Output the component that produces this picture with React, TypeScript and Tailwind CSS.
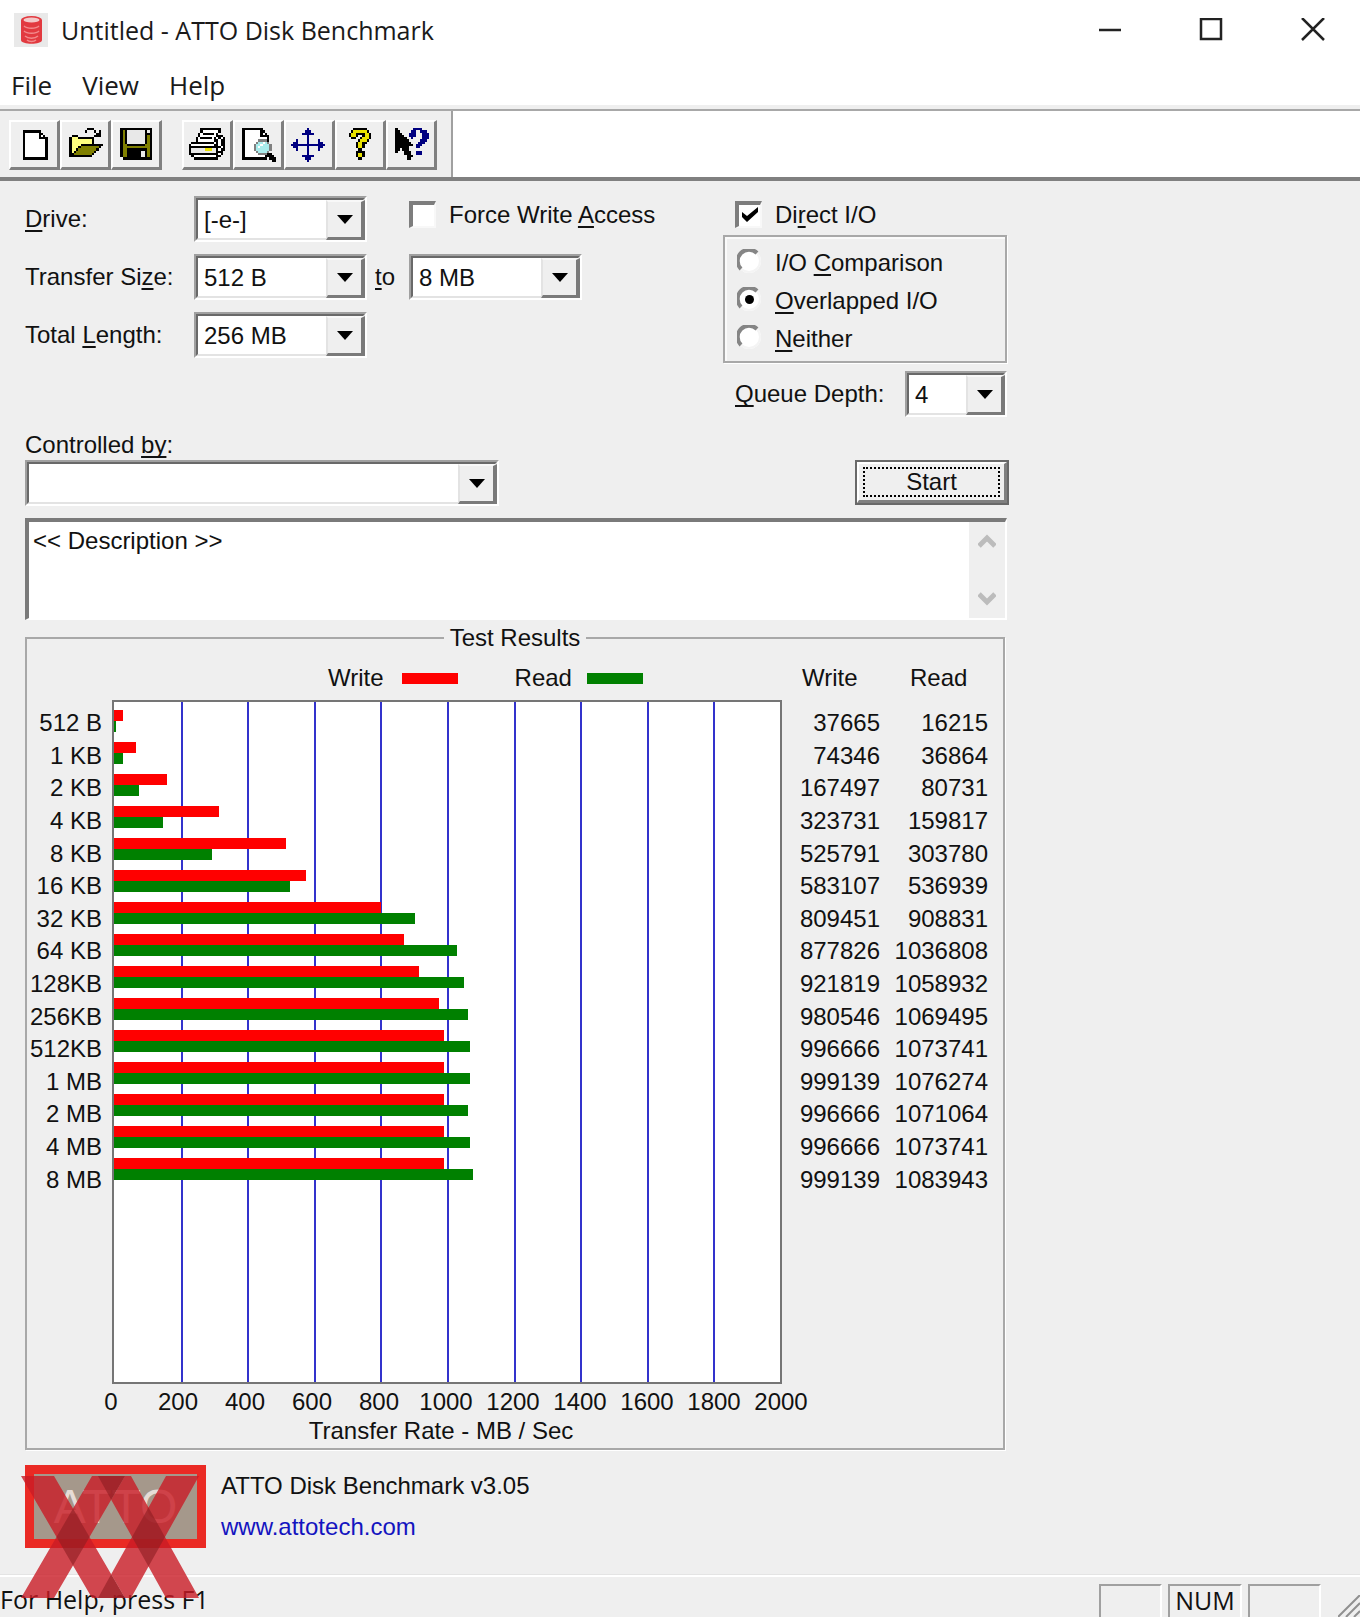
import React from "react";

const ui = "font-['Open_Sans','Noto_Sans',sans-serif]";

const results: [string, number, number][] = [
  ["512 B", 37665, 16215],
  ["1 KB", 74346, 36864],
  ["2 KB", 167497, 80731],
  ["4 KB", 323731, 159817],
  ["8 KB", 525791, 303780],
  ["16 KB", 583107, 536939],
  ["32 KB", 809451, 908831],
  ["64 KB", 877826, 1036808],
  ["128KB", 921819, 1058932],
  ["256KB", 980546, 1069495],
  ["512KB", 996666, 1073741],
  ["1 MB", 999139, 1076274],
  ["2 MB", 996666, 1071064],
  ["4 MB", 996666, 1073741],
  ["8 MB", 999139, 1083943],
];

const axis = [0, 200, 400, 600, 800, 1000, 1200, 1400, 1600, 1800, 2000];

const barWidth = (kb: number) => `${((Math.floor(kb * 0.00015) - 1) / 299) * 100}%`;

const palette: Record<string, string> = {
  K: "#000000",
  W: "#ffffff",
  Y: "#ffff80",
  H: "#e8e000",
  O: "#808000",
  N: "#000080",
  G: "#808080",
  C: "#a8ecec",
  E: "#e8e8e8",
};

const icons: Record<string, string[]> = {
  New: [
    "................",
    "...KKKKKKKK.....",
    "...KWWWWWWKK....",
    "...KWWWWWWKWK...",
    "...KWWWWWWKKKK..",
    "...KWWWWWWWWWK..",
    "...KWWWWWWWWWK..",
    "...KWWWWWWWWWK..",
    "...KWWWWWWWWWK..",
    "...KWWWWWWWWWK..",
    "...KWWWWWWWWWK..",
    "...KWWWWWWWWWK..",
    "...KWWWWWWWWWK..",
    "...KKKKKKKKKKK..",
  ],
  Open: [
    ".........KKK....",
    "........K...K.K.",
    ".............KK.",
    "..KKK.......KKK.",
    ".KYYYKKKKKKK....",
    ".KYYYYYYYYYK....",
    ".KYYYYYYYYYK....",
    ".KYYYYKKKKKKKKKK",
    ".KYYYKOOOOOOOOK.",
    ".KYYKOOOOOOOOK..",
    ".KYKOOOOOOOOK...",
    ".KKOOOOOOOOK....",
    ".KKKKKKKKKK.....",
  ],
  Save: [
    ".KKKKKKKKKKKKKK.",
    ".KOKEEEEEEEEKEK.",
    ".KOKEEEEEEEEKKK.",
    ".KOKEEEEEEEEKOK.",
    ".KOKEEEEEEEEKOK.",
    ".KOKEEEEEEEEKOK.",
    ".KOKEEEEEEEEKOK.",
    ".KOOKKKKKKKKOOK.",
    ".KOOOOOOOOOOOOK.",
    ".KOOKKKKKKKKKOK.",
    ".KOOKKKKKKEEKOK.",
    ".KOOKKKKKKEEKOK.",
    ".KOOKKKKKKEEKOK.",
    "..KKKKKKKKKKKKK.",
  ],
  Print: [
    ".....KKKKKKKKK..",
    ".....KWWWWWWWK..",
    "....KWKKKKKWK...",
    "....KWWWWWWWKKK.",
    "...KWKKKKKWKWKWK",
    "...KWWWWWWWKKWKK",
    ".KKKKKKKKKKWKWKK",
    "KWWWWWWWWWWKKWKK",
    "KKKKKKKKKKKKKKWK",
    "KEEEEEEHHHEEKWKK",
    "KEEEEEEEEEEEKKK.",
    "KKKKKKKKKKKKKWK.",
    ".KWWWWWWWWWWKK..",
    "..KKKKKKKKKKK...",
  ],
  "Print Preview": [
    ".KKKKKKKKK......",
    ".KWWWWWWWKK.....",
    ".KWWWWWWWKWK....",
    ".KWWWWWWWKKKK...",
    ".KWWWWWWWWWWK...",
    ".KWWWWWWGGGGK...",
    ".KWWWWWGCCWCG...",
    ".KWWWWGCCWCCCG..",
    ".KWWWWGCWCCCCG..",
    ".KWWWWGCCCCCCG..",
    ".KWWWWWGCCCCG...",
    ".KWWWWWWGGGGKK..",
    ".KWWWWWWWWWKKKK.",
    ".KKKKKKKKKKK.KKK",
    "..............KK",
  ],
  Move: [
    ".......N........",
    "......NNN.......",
    ".....NNNNN......",
    ".......N........",
    ".......N........",
    "..N....N....N...",
    ".NN....N....NN..",
    "NNNNNNNNNNNNNNN.",
    ".NN....N....NN..",
    "..N....N....N...",
    ".......N........",
    ".......N........",
    ".....NNNNN......",
    "......NNN.......",
    ".......N........",
  ],
  About: [
    ".....KKKKKK.....",
    "....KHHHHHHK....",
    "...KHHKKKKHHK...",
    "...KHHK..KHHK...",
    "....KK..KHHHK...",
    ".......KHHHK....",
    "......KHHKK.....",
    "......KHHK......",
    "......KHHK......",
    ".......KK.......",
    "......KKKK......",
    "......KHHK......",
    "......KHHK......",
    ".......KK.......",
  ],
  "Context Help": [
    ".K.......NNNN...",
    ".KK.....NN..NNN.",
    ".KKK...NNN...NNN",
    ".KKKK..NNN...NNN",
    ".KKKKK..N....NNN",
    ".KKKKKK.....NNN.",
    ".KKKKKKK...NNN..",
    ".KKKKKKKK.NNN...",
    ".KKKKKK...NN....",
    ".KK.KKK.........",
    ".K...KKK..NNN...",
    ".....KKK..NNN...",
    "......KKK.......",
    "......KK........",
  ],
};

function PixelIcon({ name }: { name: string }) {
  return (
    <svg viewBox="0 0 16 15" className="h-[34px] w-9" shapeRendering="crispEdges" aria-hidden="true">
      {icons[name].flatMap((row, y) =>
        row.split("").map((c, x) =>
          c === "." ? null : <rect key={`${x}-${y}`} x={x} y={y} width="1" height="1" fill={palette[c]} />
        )
      )}
    </svg>
  );
}

function ToolButton({ name }: { name: string }) {
  return (
    <button
      type="button"
      aria-label={name}
      className="flex h-[50px] w-[51px] items-center justify-center border-t-2 border-r-[3px] border-b-[3px] border-l-2 border-t-white border-r-[#808080] border-b-[#808080] border-l-white bg-[#efefef]"
    >
      <PixelIcon name={name} />
    </button>
  );
}

function Combo({ id, value, options, className }: { id: string; value: string; options: string[]; className: string }) {
  return (
    <div className={`relative h-[46px] border-2 border-t-[#a0a0a0] border-r-white border-b-white border-l-[#a0a0a0] ${className}`}>
      <select
        id={id}
        defaultValue={value}
        className="block h-full w-full appearance-none border-2 border-t-[#696969] border-r-[#e3e3e3] border-b-[#e3e3e3] border-l-[#696969] bg-white pt-0.5 pl-1.5 outline-none"
      >
        {options.map((o) => (
          <option key={o}>{o}</option>
        ))}
      </select>
      <span className="pointer-events-none absolute top-0.5 right-0 bottom-0 flex w-[39px] items-center justify-center border-t-2 border-r-4 border-b-[3px] border-l-2 border-t-[#f8f8f8] border-r-[#7a7a7a] border-b-[#7a7a7a] border-l-[#e3e3e3] bg-[#efefef]">
        <svg viewBox="0 0 16 9" className="h-[9px] w-4" aria-hidden="true">
          <path d="M0 0h16L8 9z" fill="#000" />
        </svg>
      </span>
    </div>
  );
}

function Check({ id, checked, children }: { id: string; checked?: boolean; children: React.ReactNode }) {
  return (
    <div className="flex items-center gap-[13px] whitespace-nowrap">
      <span className="relative h-[27px] w-[27px] shrink-0">
        <input
          id={id}
          type="checkbox"
          defaultChecked={checked}
          className="peer block h-full w-full appearance-none border-t-4 border-r-2 border-b-2 border-l-4 border-t-[#7d7d7d] border-r-[#f8f8f8] border-b-[#f8f8f8] border-l-[#7d7d7d] bg-white"
        />
        <svg viewBox="0 0 18 16" className="pointer-events-none absolute top-1.5 left-1.5 hidden h-4 w-[18px] peer-checked:block" aria-hidden="true">
          <path d="M1 5v5l5 5L17 5V0L6 9z" fill="#000" />
        </svg>
      </span>
      <label htmlFor={id} className="pt-0.5">{children}</label>
    </div>
  );
}

function Radio({ id, checked, children }: { id: string; checked?: boolean; children: React.ReactNode }) {
  return (
    <div className="flex h-[38px] items-center gap-3.5">
      <span className="relative h-6 w-6 shrink-0">
        <input
          id={id}
          type="radio"
          name="io-mode"
          defaultChecked={checked}
          className="peer block h-full w-full appearance-none rounded-full bg-white"
        />
        <svg viewBox="0 0 24 24" className="pointer-events-none absolute inset-0" fill="none" aria-hidden="true">
          <circle cx="12" cy="12" r="11" stroke="#f4f4f4" strokeWidth="2" />
          <path d="M4 20A11 11 0 0 1 20 4" stroke="#858585" strokeWidth="4" />
        </svg>
        <span className="pointer-events-none absolute top-2 left-2 hidden h-[9px] w-[9px] rounded-full bg-black peer-checked:block" />
      </span>
      <label htmlFor={id} className="pt-1">{children}</label>
    </div>
  );
}

const U = ({ children }: { children: React.ReactNode }) => (
  <span className="underline decoration-2 underline-offset-3 [text-decoration-skip-ink:none]">{children}</span>
);

function TitleBar() {
  return (
    <header className={`flex h-[60px] items-center bg-white pl-3.5 text-[25px] text-[#1a1a1a] ${ui}`}>
      <svg viewBox="0 0 34 34" className="h-[34px] w-[34px]" aria-hidden="true">
        <rect width="34" height="34" fill="#e9e9e9" />
        <path d="M7 7v20c0 5 21 5 21 0V7z" fill="#e23a40" />
        <ellipse cx="17.5" cy="7" rx="10.5" ry="4" fill="#e23a40" />
        <ellipse cx="17.5" cy="7" rx="8" ry="2.5" fill="#f3c9c9" />
        <path d="M10 13c3 3 12 3 15 0M10 18c3 3 12 3 15 0M11 23c3 3 10 3 13 0M13 27c2 2 7 2 9 0" fill="none" stroke="#f28a8c" strokeWidth="1.5" />
      </svg>
      <h1 className="ml-[13px] flex-1 whitespace-nowrap">Untitled - ATTO Disk Benchmark</h1>
      <div className="flex pr-[35px]">
        <button type="button" aria-label="Minimize" className="mr-[77px]">
          <svg viewBox="0 0 24 24" className="h-6 w-6"><path d="M1 12h22" stroke="#222" strokeWidth="2.5" /></svg>
        </button>
        <button type="button" aria-label="Maximize" className="mr-[78px]">
          <svg viewBox="0 0 24 24" className="h-6 w-6"><path d="M2 1h20v20H2z" fill="none" stroke="#222" strokeWidth="2.5" /></svg>
        </button>
        <button type="button" aria-label="Close">
          <svg viewBox="0 0 24 24" className="h-6 w-6"><path d="M1 0l22 22M23 0L1 22" stroke="#222" strokeWidth="2.5" /></svg>
        </button>
      </div>
    </header>
  );
}

function Settings() {
  return (
    <section className="flex justify-between">
      <div className="grid auto-rows-min grid-cols-[169px_173px_42px_auto] items-center gap-y-3 whitespace-nowrap">
        <label htmlFor="drive"><U>D</U>rive:</label>
        <Combo id="drive" value="[-e-]" options={["[-c-]", "[-d-]", "[-e-]"]} className="w-full" />
        <div className="col-start-4 self-start pt-[3px]">
          <div className="w-[173px]">
            <Check id="force">Force Write <U>A</U>ccess</Check>
          </div>
        </div>
        <label htmlFor="size-from">Transfer Si<U>z</U>e:</label>
        <Combo id="size-from" value="512 B" options={["512 B", "1 KB", "2 KB"]} className="w-full" />
        <label htmlFor="size-to" className="pl-2"><U>t</U>o</label>
        <Combo id="size-to" value="8 MB" options={["2 MB", "4 MB", "8 MB"]} className="w-[173px]" />
        <label htmlFor="length">Total <U>L</U>ength:</label>
        <Combo id="length" value="256 MB" options={["64 MB", "128 MB", "256 MB"]} className="w-full" />
      </div>
      <div className="w-[284px]">
        <div className="h-[39px] pt-[3px] pl-3">
          <Check id="direct" checked>Di<U>r</U>ect I/O</Check>
        </div>
        <div role="radiogroup" aria-label="I/O mode" className="border-2 border-[#a8a8a8] py-[5px] pl-3 shadow-[inset_2px_2px_0_#fafafa,1px_1px_0_#fff]">
          <Radio id="compare">I/O <U>C</U>omparison</Radio>
          <Radio id="overlapped" checked><U>O</U>verlapped I/O</Radio>
          <Radio id="neither"><U>N</U>either</Radio>
        </div>
        <div className="mt-2 flex items-center justify-between pl-3">
          <label htmlFor="queue"><U>Q</U>ueue Depth:</label>
          <Combo id="queue" value="4" options={["2", "4", "8"]} className="w-[102px]" />
        </div>
      </div>
    </section>
  );
}

function Chart() {
  return (
    <fieldset className="mt-1 mr-0.5 flex border-2 border-[#a8a8a8] shadow-[1px_1px_0_#fff]">
      <legend className="mx-auto px-1.5">Test Results</legend>
      <div className="min-w-0 flex-1 pt-3 pb-[3px]">
        <div className="flex items-center pl-[301px]">
          <span>Write</span>
          <span className="ml-[18px] h-[11px] w-14 bg-[#ff0000]" />
          <span className="ml-[57px]">Read</span>
          <span className="ml-[15px] h-[11px] w-14 bg-[#008000]" />
        </div>
        <div className="mt-2 flex">
          <ul className="mt-1.5 flex h-[489px] w-[85px] flex-col pr-2.5 text-right">
            {results.map(([label]) => (
              <li key={label} className="flex flex-1 items-center justify-end pt-0.5 whitespace-nowrap">{label}</li>
            ))}
          </ul>
          <div className="relative h-[684px] flex-1 border-2 border-[#757575] bg-white">
            <div className="absolute inset-0 flex pl-0.5">
              {axis.slice(1).map((v) => (
                <span key={v} className="flex-1 border-r-2 border-[#3333cc] last:border-r-0" />
              ))}
            </div>
            <div className="relative pt-2">
              {results.map(([label, w, r]) => (
                <div key={label} className="h-8">
                  <div className="h-[11px] bg-[#ff0000]" style={{ width: barWidth(w) }} />
                  <div className="h-[11px] bg-[#008000]" style={{ width: barWidth(r) }} />
                </div>
              ))}
            </div>
          </div>
        </div>
        <div className="mt-1 mr-px ml-[84px] flex justify-between">
          {axis.map((v) => (
            <span key={v} className="flex w-0 justify-center">{v}</span>
          ))}
        </div>
        <p className="pt-px pl-[73px] text-center">Transfer Rate - MB / Sec</p>
      </div>
      <table className="mt-3 w-[221px] table-fixed self-start text-right">
        <thead>
          <tr className="h-[42px] text-left align-top">
            <th scope="col" className="w-[98px] pl-5 font-normal">Write</th>
            <th scope="col" className="pl-[30px] font-normal">Read</th>
          </tr>
        </thead>
        <tbody className="h-[489px]">
          {results.map(([label, w, r]) => (
            <tr key={label}>
              <td className="pt-0.5">{w}</td>
              <td className="pt-0.5 pr-[15px]">{r}</td>
            </tr>
          ))}
        </tbody>
      </table>
    </fieldset>
  );
}

function Brand() {
  return (
    <section className="mt-[15px] flex">
      <div className="relative flex h-[83px] w-[181px] items-center justify-center border-[9px] border-[#ea2a24] bg-[#a5988b] text-[48px] leading-none text-[#e6dcd6]">
        <span>ATTO</span>
        <svg viewBox="0 0 178 122" className="absolute top-0.5 -left-[13px] h-[122px] w-[178px]" aria-hidden="true">
          <g fill="#c91c26" fillOpacity="0.8">
            <path d="M0 0H33L52 32.6 71 0H104L68.5 61 104 122H71L52 89.4 33 122H0L35.5 61z" />
            <path d="M104 0H110L127.5 31.4 145 0H178L144 61 178 122H145L127.5 90.6 110 122H104L90.2 98.3 111 61 90.2 23.7z" />
          </g>
          <g fill="#8c1d22" fillOpacity="0.6">
            <path d="M52 32.6L68.5 61 52 89.4 35.5 61z" />
            <path d="M127.5 31.4L144 61 127.5 90.6 111 61z" />
            <path d="M77 0H104L90.2 23.7z" />
            <path d="M77 122H104L90.2 98.3z" />
          </g>
        </svg>
      </div>
      <div className="ml-[15px] pt-[7px]">
        <p>ATTO Disk Benchmark v3.05</p>
        <a href="#attotech" className="mt-[13px] block text-[#1414c0]">www.attotech.com</a>
      </div>
    </section>
  );
}

function StatusBar() {
  const pane = "h-[34px] border-t-2 border-l-2 border-r-2 border-t-[#a0a0a0] border-l-[#a0a0a0] border-r-white";
  return (
    <footer className={`flex h-[42px] border-t-2 border-white text-[25px] leading-7 shadow-[0_-1px_0_#e4e4e4] ${ui}`}>
      <p className="flex-1 pt-2">For Help, press F1</p>
      <div className="flex gap-1.5 pt-[7px]">
        <span className={`w-[63px] ${pane}`} />
        <span className={`w-[74px] text-center ${pane}`}>NUM</span>
        <span className={`w-[73px] ${pane}`} />
      </div>
      <svg viewBox="0 0 22 22" className="ml-[17px] h-[22px] w-[22px] self-end" stroke="#909090" strokeWidth="2" aria-hidden="true">
        <path d="M0 22L22 0M8 22L22 8M16 22l6-6" />
      </svg>
    </footer>
  );
}

export default function App() {
  return (
    <div className="flex min-h-screen flex-col bg-[#efefef] font-['Liberation_Sans',Arial,sans-serif] text-[24px] leading-7 text-[#111]">
      <TitleBar />
      <nav className={`flex h-[45px] items-center gap-[30px] bg-white pt-1 pl-[11px] text-[26px] text-[#1a1a1a] ${ui}`}>
        <button type="button">File</button>
        <button type="button">View</button>
        <button type="button">Help</button>
      </nav>
      <div className="mt-1 flex h-[72px] border-t-2 border-b-4 border-t-[#a8a8a8] border-b-[#808080] bg-white">
        <div className="flex items-start border-r-2 border-[#a0a0a0] bg-[#efefef] pt-[9px] pr-3.5 pl-[9px]">
          <ToolButton name="New" />
          <ToolButton name="Open" />
          <ToolButton name="Save" />
          <div className="ml-5 flex">
            <ToolButton name="Print" />
            <ToolButton name="Print Preview" />
            <ToolButton name="Move" />
            <ToolButton name="About" />
            <ToolButton name="Context Help" />
          </div>
        </div>
      </div>
      <main className="flex-1 px-[25px] pt-[15px]">
        <div className="w-full max-w-[982px]">
          <Settings />
          <label htmlFor="controller" className="mt-3.5 block">Controlled <U>by</U>:</label>
          <div className="mt-px -mr-0.5 flex justify-between">
            <Combo id="controller" value="" options={[""]} className="w-[474px]" />
            <button type="button" className="h-[45px] w-[154px] border-2 border-[#696969] bg-[#efefef]">
              <span className="block h-full border-t-2 border-r-[3px] border-b-[3px] border-l-2 border-t-white border-r-[#808080] border-b-[#808080] border-l-white px-1.5 py-[5px]">
                <span className="flex h-full items-center justify-center outline-2 outline-dotted outline-black">Start</span>
              </span>
            </button>
          </div>
          <div className="mt-3 flex h-[102px] border-t-4 border-r-2 border-b-2 border-l-4 border-t-[#7a7a7a] border-r-white border-b-white border-l-[#7a7a7a] bg-white">
            <textarea
              aria-label="Description"
              defaultValue="<< Description >>"
              className="block h-full flex-1 resize-none overflow-hidden bg-transparent pt-[5px] pl-1 outline-none"
            />
            <div className="flex w-9 flex-col items-center justify-between bg-[#efefef] py-3" aria-hidden="true">
              <svg viewBox="0 0 18 14" className="h-3.5 w-[18px]"><path d="M1 12l8-8 8 8" fill="none" stroke="#bcbcbc" strokeWidth="5" /></svg>
              <svg viewBox="0 0 18 14" className="h-3.5 w-[18px]"><path d="M1 2l8 8 8-8" fill="none" stroke="#bcbcbc" strokeWidth="5" /></svg>
            </div>
          </div>
          <Chart />
          <Brand />
        </div>
      </main>
      <StatusBar />
    </div>
  );
}
